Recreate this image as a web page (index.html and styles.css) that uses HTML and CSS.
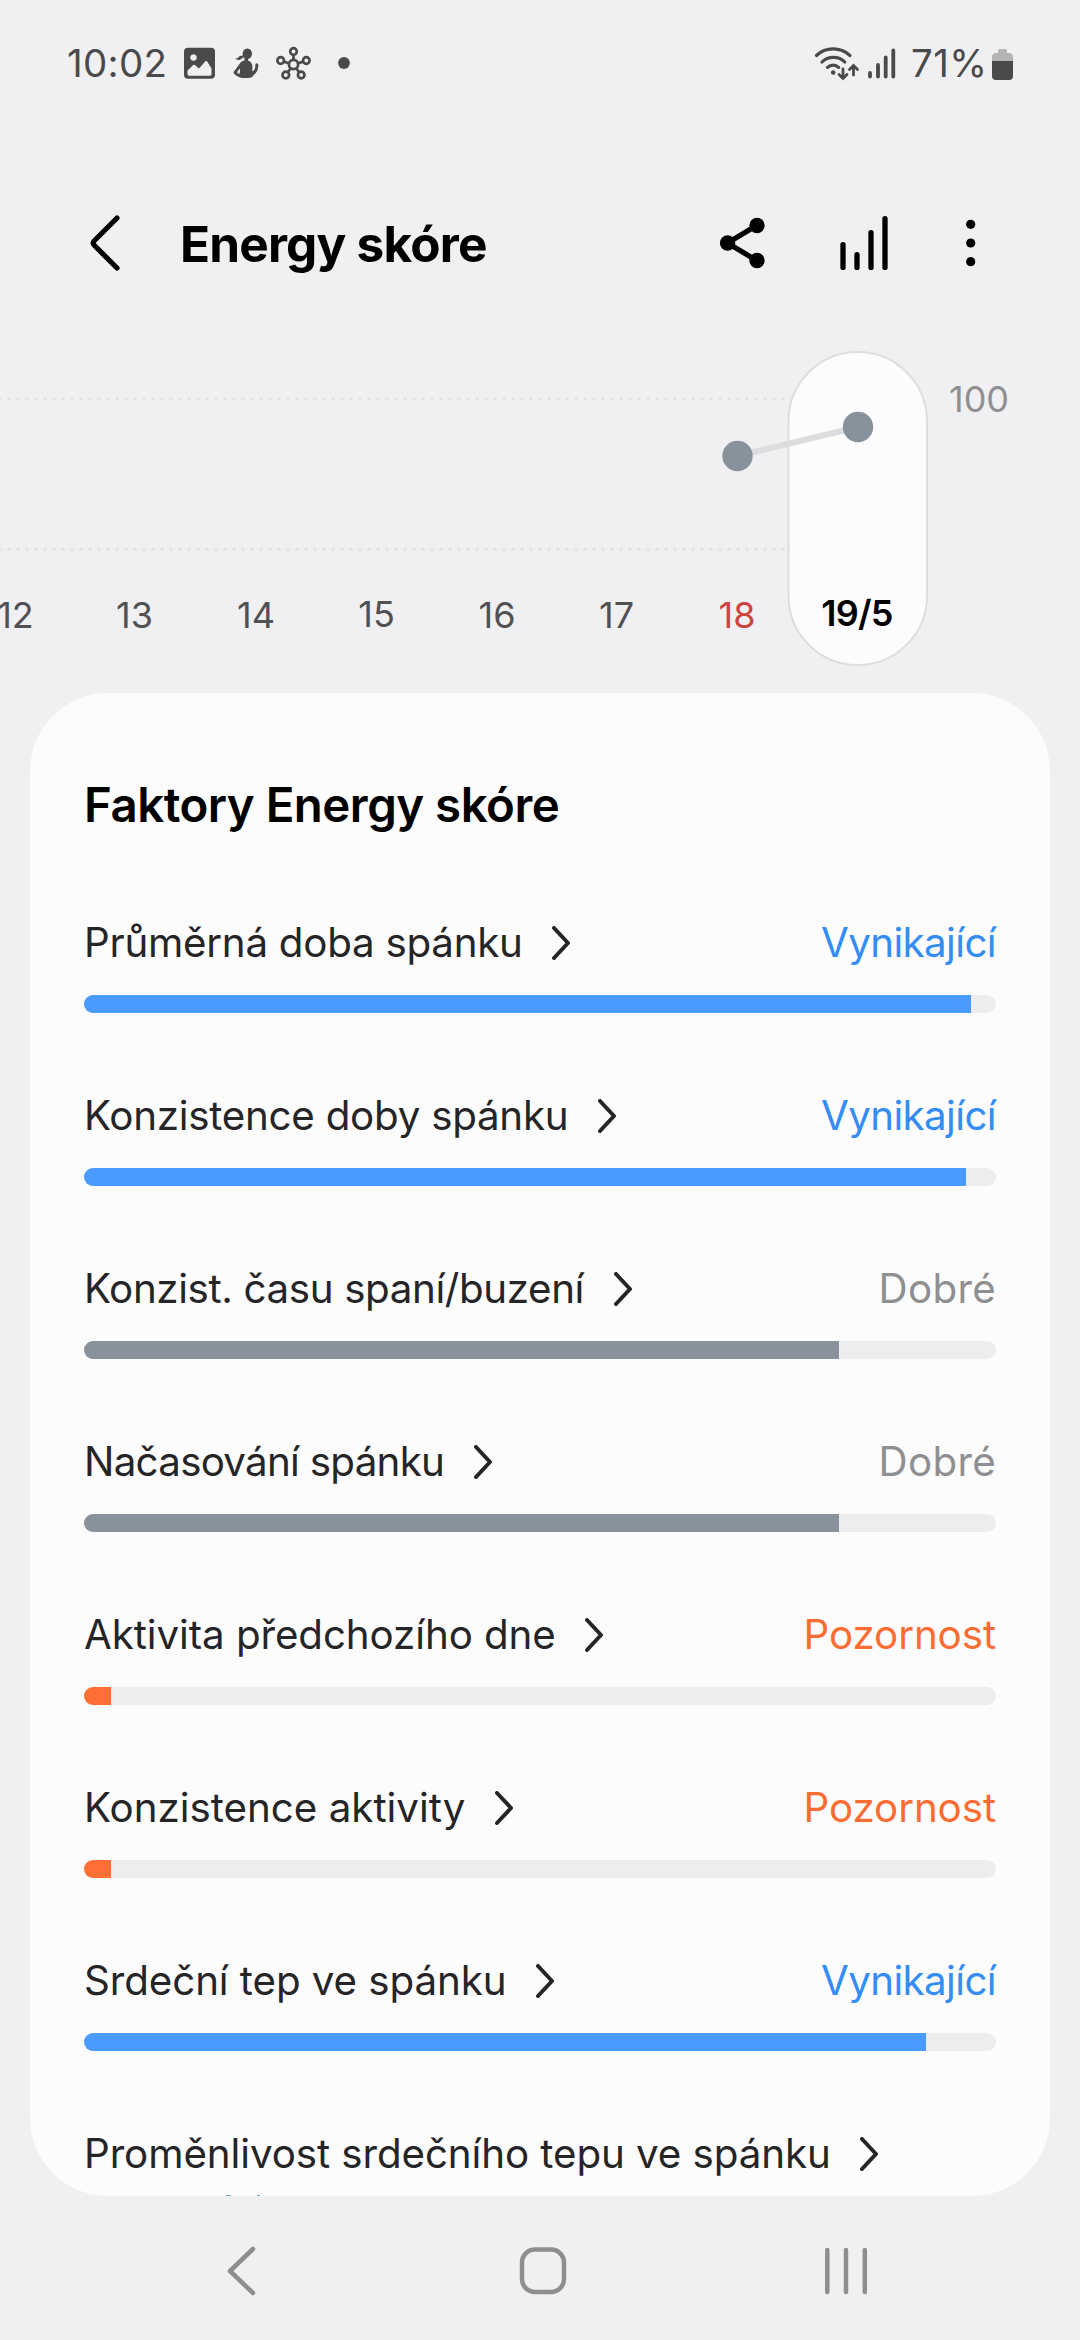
FILE: index.html
```html
<!DOCTYPE html>
<html lang="cs">
<head>
<meta charset="utf-8">
<title>Energy skóre</title>
<link rel="stylesheet" href="styles.css">
</head>
<body>
<div class="screen">
  <div class="status">
    <span class="clock">10:02</span>
    <svg class="status-left" width="170" height="40" viewBox="182 43 170 40">
      <path fill="#4a4a4c" fill-rule="evenodd" d="M188 47.700h23a4 4 0 0 1 4 4v23a4 4 0 0 1-4 4h-23a4 4 0 0 1-4-4v-23a4 4 0 0 1 4-4zM193.500 54.200a3.300 3.300 0 1 0 .01 0zM187.500 70.500v3.500q0 1.700 1.700 1.700h20.600q1.700 0 1.700-1.700v-5.500l-4.500-7.200q-.8-.8-1.600 0l-6.400 7.200-4.200-3.400q-.8-.6-1.600 0z"/>
      <g fill="#4a4a4c">
        <ellipse cx="247.300" cy="53.800" rx="4.700" ry="5.200"/>
        <path d="M243 55.500c-3 .2-4.500 1.200-5.500 2.800l-2.200.3c2 2 4.500 1.800 6 .2 1-1 1.800-1.300 3-1.300z"/>
        <path fill-rule="evenodd" d="M244.500 57.500v3c-2.500.8-4 1.500-5 3.500l-4 5.500c-1.300 1.700-2 2.500-2 3.500 1.500 2 5 4.700 9 4.900h5.500c3 0 5-1 6-3.500 2.500-1.500 3.800-4 4-7 .7-1.800.5-3.500-.8-4-1.300-.3-2 .8-1.900 2.500 0 2.700-.8 4.300-2.800 5.600-.5-2 .2-3.500-.2-6-.3-2.500-1.800-4.200-4.300-5.100v-3.400zM239.700 68.500c.6 2.200.2 3.800-.4 5.500-1-.5-1.800-1-2.300-1.700z"/>
      </g>
      <g fill="none" stroke="#4a4a4c" stroke-width="2.700">
        <circle cx="293.500" cy="64.500" r="4.600"/>
        <circle cx="293.500" cy="51.500" r="3.300"/>
        <circle cx="280.700" cy="60.500" r="3.300"/>
        <circle cx="306.300" cy="60.500" r="3.300"/>
        <circle cx="285.800" cy="75" r="3.300"/>
        <circle cx="301.200" cy="75" r="3.300"/>
        <path d="M293.500 55v5M284 61.700l5 1.500M303 61.700l-5 1.500M287.800 72.200l3-4M299.200 72.200l-3-4"/>
      </g>
      <circle cx="344" cy="63" r="5.900" fill="#4a4a4c"/>
    </svg>
    <svg class="status-right" width="84" height="40" viewBox="813 43 84 40">
      <g fill="none" stroke="#4a4a4c" stroke-width="3.200" stroke-linecap="round">
        <path d="M816.500 55.500c9-8.800 24-8.800 33.500 0M822 62c6-6.200 17-6.200 22.700 0M827.500 67.300c3.200-3 8-3 11.200 0"/>
        <path stroke-width="2.800" d="M843 69v9.500m-4-4 4 4 4-4M853.500 75v-9.500m-4 4 4-4 4 4"/>
        <path stroke-width="3.800" d="M870 73v3.500M878 65v11.500M885.700 57.500v19M893.300 50.500v26"/>
      </g>
      <circle cx="833.200" cy="72.500" r="2.300" fill="#4a4a4c"/>
    </svg>
    <span class="percent">71%</span>
    <svg class="battery" width="21" height="32" viewBox="0 0 21 32">
      <path fill="#b4b4b6" d="M6 2.500q0-1.500 1.500-1.500h6q1.500 0 1.500 1.500V5h3q3 1 3 4v5H0V9q0-3 3-4h3z"/>
      <path fill="#4a4a4c" d="M0 13h21v15q0 4-4 4H4q-4 0-4-4z"/>
    </svg>
  </div>

  <header class="bar">
    <svg class="back" width="40" height="60" viewBox="85 213 40 60">
      <path d="M117 218 94.500 240.500q-2.500 2.500 0 5L117 268" fill="none" stroke="#000" stroke-width="5.200" stroke-linecap="round" stroke-linejoin="round"/>
    </svg>
    <h1>Energy skóre</h1>
    <svg class="share" width="60" height="60" viewBox="712 213 60 60">
      <path d="M757 225.300 727.500 243 757 260.700" fill="none" stroke="#000" stroke-width="5.200"/>
      <circle cx="727.600" cy="243" r="7.700"/><circle cx="757" cy="225.500" r="7.700"/><circle cx="757" cy="260.500" r="7.700"/>
    </svg>
    <svg class="trend" width="60" height="60" viewBox="834 213 60 60">
      <path d="M843 244.700v22.700M857 254.700v12.700M871 232.700v34.700M885 218.600v48.800" fill="none" stroke="#000" stroke-width="5.300" stroke-linecap="round"/>
    </svg>
    <svg class="more" width="60" height="60" viewBox="941 213 60 60">
      <circle cx="970.700" cy="224.300" r="4.600"/><circle cx="970.700" cy="243" r="4.600"/><circle cx="970.700" cy="261.700" r="4.600"/>
    </svg>
  </header>

  <svg class="chart" width="1080" height="400" viewBox="0 293 1080 400">
    <path class="grid" d="M0 399.300H786M0 549.200H786"/>
    <rect class="pill" x="788.500" y="352" width="138.500" height="313" rx="69.250"/>
    <path class="trend-line" d="M737.500 456 858 427"/>
    <circle class="point" cx="737.500" cy="456" r="15.200"/>
    <circle class="point" cx="858" cy="427" r="15.200"/>
    <g class="days">
      <text x="15.500" y="628">12</text>
      <text x="134.500" y="628">13</text>
      <text x="256" y="628">14</text>
      <text x="376.500" y="627">15</text>
      <text x="497" y="628">16</text>
      <text x="616.500" y="628">17</text>
      <text class="sunday" x="737" y="628">18</text>
      <text class="today" x="857" y="626">19/5</text>
    </g>
    <text class="scale" x="949" y="412">100</text>
  </svg>

  <main class="card">
    <h2>Faktory Energy skóre</h2>
    <div class="factor great">
      <div class="line"><span class="snug">Průměrná doba spánku</span><svg class="chev" viewBox="0 0 18 34"><path d="M2 2 16 17 2 32"/></svg><b>Vynikající</b></div>
      <div class="track"><div class="fill" style="width:97.3%"></div></div>
    </div>
    <div class="factor great">
      <div class="line"><span class="snug">Konzistence doby spánku</span><svg class="chev" viewBox="0 0 18 34"><path d="M2 2 16 17 2 32"/></svg><b>Vynikající</b></div>
      <div class="track"><div class="fill" style="width:96.7%"></div></div>
    </div>
    <div class="factor good">
      <div class="line"><span class="tight">Konzist. času spaní/buzení</span><svg class="chev" viewBox="0 0 18 34"><path d="M2 2 16 17 2 32"/></svg><b>Dobré</b></div>
      <div class="track"><div class="fill" style="width:82.8%"></div></div>
    </div>
    <div class="factor good">
      <div class="line"><span class="tighter">Načasování spánku</span><svg class="chev" viewBox="0 0 18 34"><path d="M2 2 16 17 2 32"/></svg><b>Dobré</b></div>
      <div class="track"><div class="fill" style="width:82.8%"></div></div>
    </div>
    <div class="factor poor">
      <div class="line"><span>Aktivita předchozího dne</span><svg class="chev" viewBox="0 0 18 34"><path d="M2 2 16 17 2 32"/></svg><b>Pozornost</b></div>
      <div class="track"><div class="fill" style="width:3%"></div></div>
    </div>
    <div class="factor poor">
      <div class="line"><span class="loose">Konzistence aktivity</span><svg class="chev" viewBox="0 0 18 34"><path d="M2 2 16 17 2 32"/></svg><b>Pozornost</b></div>
      <div class="track"><div class="fill" style="width:3%"></div></div>
    </div>
    <div class="factor great">
      <div class="line"><span>Srdeční tep ve spánku</span><svg class="chev" viewBox="0 0 18 34"><path d="M2 2 16 17 2 32"/></svg><b>Vynikající</b></div>
      <div class="track"><div class="fill" style="width:92.3%"></div></div>
    </div>
    <div class="factor">
      <div class="line"><span>Proměnlivost srdečního tepu ve spánku</span><svg class="chev" viewBox="0 0 18 34"><path d="M2 2 16 17 2 32"/></svg></div>
      <svg class="peek" width="912" height="1" viewBox="0 0 912 1"><path fill="#6da6cc" d="M142 0h5v1h-5zM173 0h3v1h-3z"/></svg>
    </div>
  </main>

  <nav class="nav">
    <svg width="40" height="60" viewBox="222 2241 40 60"><path d="M253 2249 230 2271 253 2293"/></svg>
    <svg class="home" width="60" height="60" viewBox="513 2241 60 60"><rect x="522" y="2249.500" width="42" height="42.500" rx="13"/></svg>
    <svg class="recents" width="60" height="60" viewBox="816 2241 60 60"><path d="M827.300 2250v42M846 2250v42M864.800 2250v42"/></svg>
  </nav>
</div>
</body>
</html>
```
FILE: styles.css
```css
* { box-sizing: border-box; }

body {
  margin: 0;
  background: #f0f0f2;
  font-family: Inter, Roboto, sans-serif;
  color: #000;
}

.screen {
  display: flex;
  flex-direction: column;
  width: 1080px;
  height: 2340px;
  overflow: hidden;
}

svg { display: block; flex: none; }

/* Status bar */
.status {
  display: flex;
  align-items: center;
  height: 126px;
  padding: 0 67px;
  font-size: 38.5px;
  line-height: 60px;
  color: #4a4a4c;
}
.clock { width: 115px; letter-spacing: 0.3px; }
.status-right { margin-left: auto; }
.percent { margin-left: 14px; width: 81px; letter-spacing: 0.4px; white-space: nowrap; }
.battery { margin-top: 1px; }

/* App bar */
.bar {
  display: flex;
  align-items: center;
  height: 100px;
  margin-top: 67px;
  padding-left: 85px;
}
h1 {
  flex: none;
  width: 532px;
  margin: 0 0 0 55px;
  padding-top: 2px;
  font-size: 49.5px;
  font-weight: 700;
  line-height: 60px;
  letter-spacing: -0.8px;
}
.trend { margin-left: 62px; }
.more { margin-left: 47px; }

/* Score chart */
.chart { font-size: 36px; }
.grid {
  fill: none;
  stroke: #e2e2e4;
  stroke-width: 3.4;
  stroke-linecap: round;
  stroke-dasharray: 0 9;
}
.pill { fill: #fcfcfe; stroke: #dedee0; stroke-width: 2; }
.trend-line { stroke: #dddde0; stroke-width: 6; }
.point { fill: #87929d; }
.days { fill: #515154; text-anchor: middle; }
.days .sunday { fill: #ce433e; }
.days .today { fill: #000; font-weight: 600; letter-spacing: -0.8px; }
.scale { fill: #8f8f91; }

/* Factors card */
.card {
  width: 1020px;
  height: 1503px;
  margin: 0 30px;
  padding: 82px 54px 0;
  border-radius: 78px;
  background: #fcfcfd;
  overflow: hidden;
}
h2 {
  margin: 0 0 77px;
  font-size: 47.400px;
  font-weight: 600;
  line-height: 60px;
  letter-spacing: -0.5px;
}
.factor { margin-bottom: 72px; }
.line {
  display: flex;
  align-items: center;
  height: 60px;
  padding-top: 1px;
  font-size: 40.300px;
  line-height: 60px;
  letter-spacing: -0.08px;
  color: #252528;
  white-space: nowrap;
}
.snug { letter-spacing: -0.25px; }
.tight { letter-spacing: -0.37px; }
.tighter { letter-spacing: -0.72px; }
.loose { letter-spacing: 0; }
.chev {
  width: 18px;
  height: 34px;
  margin: 1px 0 0 29.500px;
  fill: none;
  stroke: #252528;
  stroke-width: 4;
  stroke-linecap: round;
  stroke-linejoin: round;
}
.line b { margin-left: auto; font-weight: 400; }
.track {
  height: 18px;
  margin-top: 23px;
  border-radius: 9px;
  background: #ededef;
  overflow: hidden;
}
.fill { height: 100%; }
.great b { color: #338df5; letter-spacing: -0.6px; }
.great .fill { background: #4a9bff; }
.good b { color: #8f8f91; letter-spacing: 0.3px; }
.good .fill { background: #87929d; }
.poor b { color: #fb6c33; }
.poor .fill { background: #ff6e33; }
.peek { margin-top: 12px; }

/* System navigation */
.nav {
  display: flex;
  height: 60px;
  margin: 45px 0 0 222px;
  fill: none;
  stroke: #8e8e8f;
  stroke-width: 4.500;
  stroke-linecap: round;
  stroke-linejoin: round;
}
.home { margin-left: 251px; }
.recents { margin-left: 243px; }
```
